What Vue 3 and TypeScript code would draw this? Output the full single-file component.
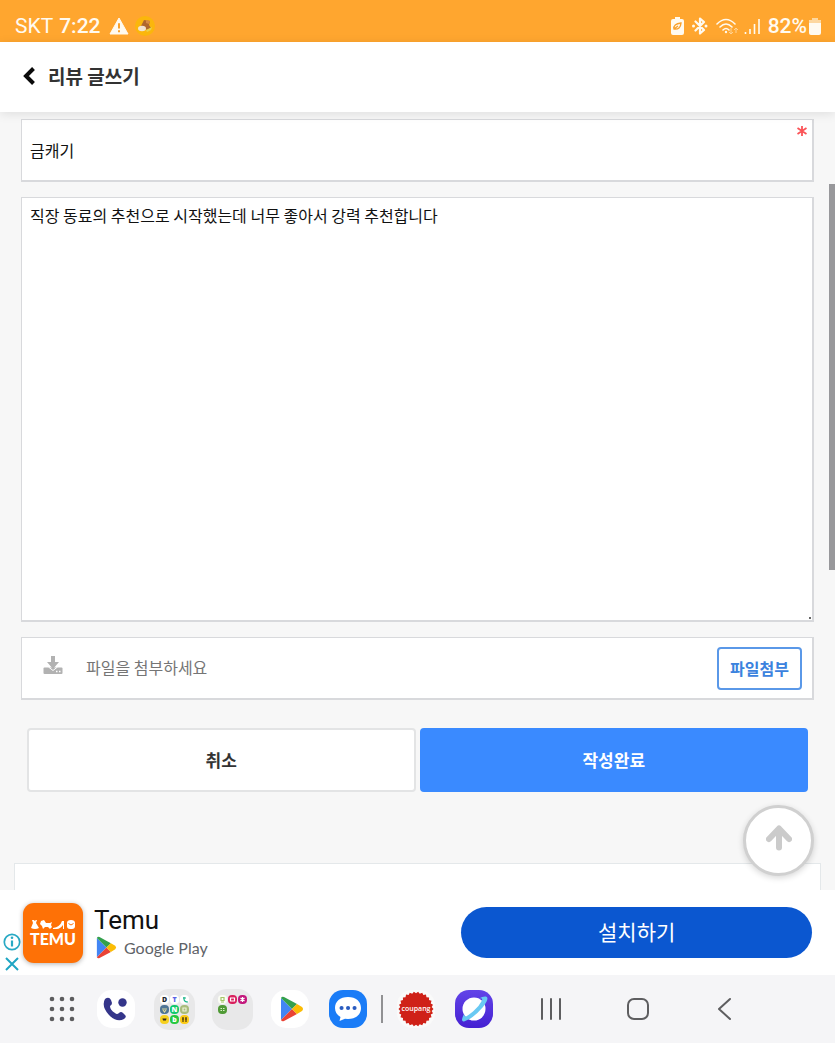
<script setup lang="ts">
import { ref } from 'vue'

interface MiniApp {
  color: string
  ink: string
  letter?: string
  path?: string
}

const title = ref('금캐기')
const review = ref('직장 동료의 추천으로 시작했는데 너무 좋아서 강력 추천합니다')
const fileName = ref('')
const filePicker = ref<HTMLInputElement | null>(null)

const folders: { name: string; apps: MiniApp[] }[] = [
  {
    name: '앱 폴더',
    apps: [
      { color: '#ffffff', ink: '#1d2530', letter: 'D' },
      { color: '#ffffff', ink: '#5b63e6', letter: 'T' },
      { color: '#ffffff', ink: '#17b487', path: 'M4 2v2q0 3 4 3M3 3h3' },
      { color: '#4f7596', ink: '#d8d7a0', path: 'M2 4h5M3 5l1.500 2L6 5' },
      { color: '#12c96b', ink: '#ffffff', letter: 'N' },
      { color: '#a9bd7c', ink: '#eef2d8', path: 'M3 3h3v3H3Z' },
      { color: '#f6d01f', ink: '#33291a', path: 'M2.500 4h4M3 5h3' },
      { color: '#27c840', ink: '#ffffff', letter: 'b' },
      { color: '#fccb14', ink: '#4d3c10', path: 'M3 2v5M2 4h2M6 2v5M5 4h2' },
    ],
  },
  {
    name: '도구 폴더',
    apps: [
      { color: '#fbfdf4', ink: '#a5c768', path: 'M3 2.500h3v3H3ZM3 7h3' },
      { color: '#d91f5c', ink: '#ffffff', path: 'M2.500 3h4v3h-4Z' },
      { color: '#c3177c', ink: '#ffffff', path: 'M4.500 2v5M2.500 3l4 3M6.500 3l-4 3' },
      { color: '#4f9a35', ink: '#d9f2c8', path: 'M2.500 3.500H4M5 3.500h1.500M2.500 5.500H4M5 5.500h1.500' },
    ],
  },
]

// Scalloped edge of the round red badge
const badgePoints: string = Array.from({ length: 52 }, (_, i) => {
  const r = i % 2 === 0 ? 17.5 : 15.8
  const a = (i * Math.PI) / 26
  return `${(20 + r * Math.cos(a)).toFixed(2)},${(20 + r * Math.sin(a)).toFixed(2)}`
}).join(' ')

function pickFile(): void {
  filePicker.value?.click()
}

function onFile(event: Event): void {
  const input = event.target as HTMLInputElement
  fileName.value = input.files?.[0]?.name ?? ''
}

function cancel(): void {
  title.value = ''
  review.value = ''
}

function toTop(): void {
  window.scrollTo({ top: 0, behavior: 'smooth' })
}
</script>

<template>
  <div class="screen">
    <div class="status">
      <div class="status-side">
        <span class="carrier">SKT</span>
        <span class="clock">7:22</span>
        <svg class="warn" width="20" height="18" viewBox="0 0 20 18" aria-hidden="true">
          <path d="M10 1 19 17H1Z" fill="#fffaf0" stroke="#fffaf0" stroke-linejoin="round" />
          <path d="M10 6.200v5.300M10 13.200v2" stroke="#f9a12c" stroke-width="2" />
        </svg>
        <svg width="20" height="20" viewBox="0 0 20 20" aria-hidden="true">
          <circle cx="10" cy="10" r="10" fill="#fbb60c" />
          <path d="m9 4 6 1-1 4 2 3-4 2-6-4Z" fill="#b0672c" />
          <path d="m11 4 4 1-1 3-3-1Z" fill="#d58a45" />
          <ellipse cx="7" cy="12.500" rx="4" ry="2.800" fill="#f3e3cf" />
          <path d="m11 14 6-3-1 3-4 2Z" fill="#e9d14b" />
        </svg>
      </div>
      <div class="status-side">
        <svg width="13" height="18" viewBox="0 0 13 18" aria-hidden="true">
          <path d="M4 0h5v2h2q2 0 2 2v12q0 2-2 2H2q-2 0-2-2V4q0-2 2-2h2Z" fill="#fffaf0" />
          <path d="M3 12q-1-5 7-6-.5 7-7 6Zm0 0 4-3" fill="none" stroke="#f9a12c" stroke-width="1.400" />
        </svg>
        <svg class="bluetooth" width="16" height="18" viewBox="0 0 16 18" aria-hidden="true">
          <path d="m3.500 4.500 8.500 8.500-4 3.500v-15l4 3.500-8.500 8.500" fill="none" stroke="#fffaf0" stroke-width="2.200" stroke-linejoin="round" stroke-linecap="round" />
          <circle cx="1.500" cy="9" r="1.500" fill="#fffaf0" />
          <circle cx="14" cy="9" r="1.500" fill="#fffaf0" />
        </svg>
        <svg width="22" height="17" viewBox="0 0 22 17" aria-hidden="true">
          <path d="M1 6q9-9 18 0M4 9q6-6 12 0M7 12q3-3 6 0" fill="none" stroke="#fffaf0" stroke-width="1.600" stroke-linecap="round" />
          <circle cx="10" cy="14" r="1.200" fill="#fffaf0" />
          <path d="M15 10v6m-2-2 2 2 2-2m3 1v-5m-2 2 2-2 2 2" fill="none" stroke="#ffd394" stroke-width="1" />
        </svg>
        <svg width="16" height="17" viewBox="0 0 16 17" aria-hidden="true">
          <path d="M1.500 14v2M6 11v5M10.500 6v10M15 1v15" stroke="#fffaf0" stroke-width="1.600" />
        </svg>
        <span class="battery">82%</span>
        <svg width="12" height="17" viewBox="0 0 12 17" aria-hidden="true">
          <path d="M3 0h6v2h2q1 0 1 1v12q0 2-2 2H2q-2 0-2-2V3q0-1 1-1h2Z" fill="#fffaf0" />
          <path d="M3 0h6v2h2q1 0 1 1v2H0V3q0-1 1-1h2Z" fill="#fdd79f" />
        </svg>
      </div>
    </div>

    <header class="top">
      <button class="back" type="button" aria-label="뒤로">
        <svg width="14" height="20" viewBox="0 0 14 20" aria-hidden="true">
          <path d="M11.500 2.500 4 10l7.500 7.500" fill="none" stroke="#0a0a0a" stroke-width="4" />
        </svg>
      </button>
      <h1>리뷰 글쓰기</h1>
    </header>

    <main class="page">
      <form class="form" @submit.prevent>
        <div class="field">
          <input v-model="title" class="text" type="text" aria-label="제목" required />
          <svg class="required" width="10" height="10" viewBox="0 0 10 10" aria-hidden="true">
            <path d="M5 0v10M.500 2l9 6M9.500 2l-9 6" stroke="#fb5357" stroke-width="1.800" />
          </svg>
        </div>

        <div class="field">
          <textarea v-model="review" class="text area" aria-label="리뷰 내용"></textarea>
          <span class="grip"></span>
        </div>

        <div class="file">
          <svg class="download" width="20" height="18" viewBox="0 0 20 18" aria-hidden="true">
            <path d="M1.500 11.500h17q1 0 1 1V17q0 1-1 1h-17q-1 0-1-1v-4.500q0-1 1-1Z" fill="#b2b2b2" />
            <path d="M8 0h4v6h4l-6 7-6-7h4Z" fill="#b2b2b2" />
            <path d="m5.500 11 4.500 3.500 4.500-3.500" fill="none" stroke="#fff" stroke-width="1" />
            <path d="M13 15.500h1.500M16 15.500h1.500" stroke="#fff" stroke-width="1.300" />
          </svg>
          <input class="file-name" type="text" :value="fileName" placeholder="파일을 첨부하세요" aria-label="첨부 파일" readonly />
          <input ref="filePicker" type="file" aria-label="파일 선택" hidden @change="onFile" />
          <button class="attach" type="button" @click="pickFile">파일첨부</button>
        </div>

        <div class="actions">
          <button class="action" type="button" @click="cancel">취소</button>
          <button class="action primary" type="submit">작성완료</button>
        </div>
      </form>

      <section class="next-card"></section>

      <button class="to-top" type="button" aria-label="맨 위로" @click="toTop">
        <svg width="26" height="26" viewBox="0 0 26 26" aria-hidden="true">
          <path d="M13 22.500V5M3 14 13 3.500 23 14" fill="none" stroke="#cbcbcb" stroke-width="6" stroke-linecap="round" stroke-linejoin="round" />
        </svg>
      </button>
      <span class="scroll-thumb"></span>
    </main>

    <aside class="ad">
      <div class="ad-marks">
        <svg width="18" height="18" viewBox="0 0 18 18" aria-hidden="true">
          <circle cx="9" cy="9" r="7.700" fill="#fff" stroke="#28a9c4" stroke-width="1.700" />
          <path d="M9 7.500v6" stroke="#28a9c4" stroke-width="2.200" />
          <circle cx="9" cy="4.800" r="1.300" fill="#28a9c4" />
        </svg>
        <button class="ad-close" type="button" aria-label="광고 닫기">
          <svg width="14" height="14" viewBox="0 0 14 14" aria-hidden="true">
            <path d="m1 1 12 12M13 1 1 13" stroke="#1ea5c3" stroke-width="2" />
          </svg>
        </button>
      </div>
      <div class="temu">
        <svg width="46" height="11" viewBox="0 0 46 11" fill="#fff" aria-hidden="true">
          <path d="M2 1h2l.7 1L6 1h1L6 4l3 5q-4 2-8 0l2-5Z" />
          <path d="m11 2 3-1 2 3h4l2-1-1 3 1 2-2 2-2-2h-3l-2 2-1-3-2-2Z" />
          <path d="M23 9q7-1 9-7h2v8h-1V6q-3 4-6 4h-4Z" />
          <path d="M37 4q0-3 4-3t4 3v3q0 3-3 3h-2q-3 0-3-3Z" />
          <path d="M38.500 4.500q2.500 3 5 0" fill="none" stroke="#fe7106" />
        </svg>
        <span class="temu-name">TEMU</span>
      </div>
      <div class="ad-text">
        <strong>Temu</strong>
        <span class="store">
          <svg width="21" height="23" viewBox="0 0 24 26" aria-hidden="true">
            <path d="M1 2v22L12 13Z" fill="#4285f4" />
            <path d="M1 2Q2 0 4 1l13 7-5 5Z" fill="#34a04c" />
            <path d="M1 24q1 2 3 1l13-7-5-5Z" fill="#ea4335" />
            <path d="m17 8 5 3q2 2 0 4l-5 3-5-5Z" fill="#fbbc04" />
          </svg>
          Google Play
        </span>
      </div>
      <a class="install" href="#install">설치하기</a>
    </aside>

    <nav class="dock" aria-label="앱 독">
      <button class="slot first" type="button" aria-label="모든 앱">
        <svg width="26" height="26" viewBox="0 0 26 26" fill="#5c5c5e" aria-hidden="true">
          <template v-for="y in 3" :key="y">
            <circle v-for="x in 3" :key="x" :cx="x * 10 - 7" :cy="y * 10 - 7" r="2.300" />
          </template>
        </svg>
      </button>
      <button class="slot" type="button" aria-label="전화">
        <svg width="40" height="40" viewBox="0 0 40 40" aria-hidden="true">
          <rect x="1" y="1" width="38" height="38" rx="15" fill="#fff" />
          <path d="M9 10q4-3 6 1l1 3q0 2-2 3 0 4 5 7 2 2 4 0 2-2 4 0l2 2q2 2-1 4-7 4-15-4-8-9-4-16Z" fill="#34358a" />
          <circle cx="26.500" cy="13.500" r="4.200" fill="#34358a" />
        </svg>
      </button>
      <button v-for="folder in folders" :key="folder.name" class="slot" type="button" :aria-label="folder.name">
        <span class="folder">
          <svg v-for="(app, i) in folder.apps" :key="i" width="9" height="9" viewBox="0 0 9 9" aria-hidden="true">
            <rect width="9" height="9" rx="4" :fill="app.color" />
            <path v-if="app.path" :d="app.path" :stroke="app.ink" fill="none" stroke-width="1.200" />
            <text v-else x="4.500" y="7" class="mini-letter" text-anchor="middle" :fill="app.ink">{{ app.letter }}</text>
          </svg>
        </span>
      </button>
      <button class="slot" type="button" aria-label="Play 스토어">
        <svg width="40" height="40" viewBox="0 0 40 40" aria-hidden="true">
          <rect x="1" y="1" width="38" height="38" rx="15" fill="#fff" />
          <g transform="translate(10 7)">
            <path d="M1 2v22L12 13Z" fill="#4285f4" />
            <path d="M1 2Q2 0 4 1l13 7-5 5Z" fill="#34a04c" />
            <path d="M1 24q1 2 3 1l13-7-5-5Z" fill="#ea4335" />
            <path d="m17 8 5 3q2 2 0 4l-5 3-5-5Z" fill="#fbbc04" />
          </g>
        </svg>
      </button>
      <button class="slot" type="button" aria-label="메시지">
        <svg width="40" height="40" viewBox="0 0 40 40" aria-hidden="true">
          <rect x="1" y="1" width="38" height="38" rx="14" fill="#1a7cf7" />
          <path d="M20 8c8 0 13 4.500 13 11s-5 11-13 11l-3-.3L11.500 32l1-4C9 26 7 23 7 19 7 12.500 12 8 20 8Z" fill="#fff" />
          <path d="M13.500 19h.1M20 19h.1M26.500 19h.1" stroke="#2a5cc0" stroke-width="4" stroke-linecap="round" />
        </svg>
      </button>
      <span class="divider"></span>
      <button class="slot" type="button" aria-label="쿠팡">
        <svg width="40" height="40" viewBox="0 0 40 40" aria-hidden="true">
          <rect x="1" y="1" width="38" height="38" rx="15" fill="#fafafa" />
          <polygon :points="badgePoints" fill="#cf2118" />
          <text x="20" y="22" class="badge-name" text-anchor="middle">coupang</text>
        </svg>
      </button>
      <button class="slot" type="button" aria-label="인터넷">
        <svg width="40" height="40" viewBox="0 0 40 40" aria-hidden="true">
          <defs>
            <linearGradient id="planet" x1="0" y1="0" x2="0" y2="1">
              <stop offset="0" stop-color="#6244e8" />
              <stop offset="1" stop-color="#4520d2" />
            </linearGradient>
          </defs>
          <rect x="1" y="1" width="38" height="38" rx="14" fill="url(#planet)" />
          <circle cx="20" cy="20" r="11.500" fill="#fff" />
          <path d="M10 25q-4 8 0 7.500Q19 30 29 18q7-9 3-10.500-3-.5-7 2 4-1 3 2-3 6-9 11-5 4-7 5-2 0-2-2.500Z" fill="#69c9f3" />
        </svg>
      </button>
      <button class="key recents" type="button" aria-label="최근 앱">
        <svg width="24" height="24" viewBox="0 0 24 24" aria-hidden="true">
          <path d="M3 2v20M12 2v20M21 2v20" stroke="#5e5e60" stroke-width="2" stroke-linecap="round" />
        </svg>
      </button>
      <button class="key" type="button" aria-label="홈">
        <svg width="24" height="24" viewBox="0 0 24 24" aria-hidden="true">
          <rect x="2" y="2" width="20" height="20" rx="6" fill="none" stroke="#5e5e60" stroke-width="2" />
        </svg>
      </button>
      <button class="key" type="button" aria-label="이전">
        <svg width="24" height="24" viewBox="0 0 24 24" aria-hidden="true">
          <path d="M17 2 6 12l11 10" fill="none" stroke="#5e5e60" stroke-width="2" stroke-linecap="round" stroke-linejoin="round" />
        </svg>
      </button>
    </nav>
  </div>
</template>

<style>
body {
  background: #f7f7f7;
}
</style>

<style scoped>
* {
  box-sizing: border-box;
}

.screen {
  display: flex;
  flex-direction: column;
  min-height: 100vh;
  background: #f7f7f7;
  color: #111;
  font-family: "Noto Sans CJK KR", "Noto Sans", sans-serif;
  font-size: 16px;
}

button,
input,
textarea {
  margin: 0;
  font: inherit;
}

button {
  padding: 0;
  border: 0;
  background: none;
  cursor: pointer;
}

svg {
  display: block;
  flex: none;
}

.status {
  display: flex;
  justify-content: space-between;
  align-items: center;
  height: 42px;
  padding: 10px 14px 0 15px;
  background: #ffa62f;
  color: #fffaf0;
  font-family: Roboto, sans-serif;
  font-size: 21px;
  line-height: 32px;
}

.status-side {
  display: flex;
  align-items: center;
  gap: 6px;
}

.carrier {
  font-size: 21px;
}

.clock,
.battery {
  font-weight: 500;
}

.warn {
  margin-left: 2px;
}

.bluetooth {
  margin: 0 2px;
}

.battery {
  margin: 0 -4px 0 2px;
}

.top {
  position: relative;
  z-index: 1;
  display: flex;
  align-items: center;
  gap: 12px;
  height: 70px;
  padding: 0 22px 2px;
  background: #fff;
  box-shadow: 0 2px 10px rgba(0, 0, 0, 0.1);
}

.top h1 {
  margin: 0;
  color: #333;
  font-size: 19px;
  font-weight: 700;
  line-height: 28px;
}

.page {
  position: relative;
  display: flex;
  flex: 1;
  flex-direction: column;
  padding: 7px 14px 0;
}

.form {
  display: flex;
  flex-direction: column;
  gap: 15px;
  padding: 0 7px;
}

.field {
  position: relative;
  display: flex;
}

.text {
  width: 100%;
  height: 63px;
  padding: 0 8px 1px;
  border: 2px solid #d8d9dc;
  border-width: 1px 2px 2px 1px;
  border-radius: 0;
  outline: none;
  background: #fff;
  color: #111;
}

.area {
  height: 425px;
  padding: 5px 8px;
  line-height: 24px;
  resize: none;
}

.required {
  position: absolute;
  top: 7px;
  right: 7px;
}

.grip {
  position: absolute;
  right: 3px;
  bottom: 3px;
  width: 2px;
  height: 2px;
  background: #666;
}

.file {
  display: flex;
  align-items: center;
  height: 63px;
  padding: 0 10px 0 21px;
  border: 2px solid #d8d9dc;
  border-width: 1px 2px 2px 1px;
  background: #fff;
}

.download {
  margin-bottom: 6px;
}

.file-name {
  flex: 1;
  min-width: 0;
  padding: 0 0 2px 23px;
  border: 0;
  outline: none;
  background: transparent;
}

.file-name::placeholder {
  color: #757575;
  opacity: 1;
}

.attach {
  height: 43px;
  padding: 0 11px;
  border: 2px solid #5a98e8;
  border-radius: 4px;
  color: #3b82de;
  font-weight: 700;
}

.actions {
  display: grid;
  grid-template-columns: 1fr 1fr;
  gap: 4px;
  padding: 13px 6px 0;
}

.action {
  height: 64px;
  padding-bottom: 2px;
  border: 2px solid #e3e4e5;
  border-radius: 4px;
  background: #fff;
  color: #333;
  font-size: 17px;
  font-weight: 700;
}

.primary {
  border-color: #3a8aff;
  background: #3a8aff;
  color: #fff;
}

.next-card {
  flex: 1;
  min-height: 27px;
  margin-top: 71px;
  border: 2px solid #e4e8ea;
  border-width: 1px 1px 0;
  background: #fff;
}

.to-top {
  position: absolute;
  right: 21px;
  bottom: 14px;
  display: grid;
  place-items: center;
  width: 71px;
  height: 71px;
  padding-bottom: 6px;
  border: 3px solid #d0d0d0;
  border-radius: 50%;
  background: #fff;
  box-shadow: 0 2px 6px rgba(0, 0, 0, 0.16);
}

.scroll-thumb {
  position: absolute;
  top: 72px;
  right: 0;
  width: 6px;
  height: 386px;
  background: #98989b;
}

.ad {
  display: flex;
  align-items: center;
  height: 85px;
  padding: 0 23px 0 3px;
  background: #fff;
}

.ad-marks {
  display: flex;
  flex-direction: column;
  align-items: center;
  gap: 6px;
  width: 18px;
  padding-top: 41px;
}

.ad-close {
  padding-bottom: 2px;
}

.temu {
  display: flex;
  flex-direction: column;
  align-items: center;
  justify-content: center;
  gap: 1px;
  width: 60px;
  height: 60px;
  margin-left: 2px;
  border-radius: 11px;
  background: #fe7106;
  box-shadow: 0 1px 5px rgba(0, 0, 0, 0.3);
}

.temu-name {
  color: #fff;
  font-family: Lato, sans-serif;
  font-size: 16px;
  font-weight: 900;
  line-height: 16px;
}

.ad-text {
  display: flex;
  flex: 1;
  flex-direction: column;
  margin-left: 11px;
  padding-bottom: 2px;
}

.ad-text strong {
  color: #111;
  font-family: Roboto, sans-serif;
  font-size: 26px;
  font-weight: 400;
  line-height: 32px;
}

.store {
  display: flex;
  align-items: center;
  gap: 7px;
  padding-left: 2px;
  color: #5f6368;
  font-family: Lato, sans-serif;
  font-size: 16px;
  line-height: 24px;
  white-space: nowrap;
}

.install {
  width: 42vw;
  padding-bottom: 2px;
  border-radius: 26px;
  background: #0b57d0;
  color: #fff;
  font-size: 21px;
  line-height: 49px;
  text-align: center;
  text-decoration: none;
}

.dock {
  display: flex;
  align-items: center;
  height: 68px;
  padding: 0 67px 0 37px;
  background: #f5f5f7;
}

.slot {
  display: grid;
  flex: 58;
  place-items: center;
  min-width: 0;
}

.first {
  flex: 50;
}

.key {
  display: grid;
  flex: 87;
  place-items: center;
  min-width: 0;
}

.recents {
  margin-left: 4px;
}

.divider {
  width: 2px;
  height: 28px;
  margin: 0 4px;
  background: #919193;
}

.folder {
  display: grid;
  grid-template-columns: repeat(3, 9px);
  grid-auto-rows: 9px;
  align-content: start;
  gap: 1px;
  width: 41px;
  height: 41px;
  padding: 6px;
  border-radius: 15px;
  background: #e8e8e9;
}

.mini-letter {
  font-family: "Open Sans", sans-serif;
  font-size: 7px;
  font-weight: 800;
}

.badge-name {
  fill: #fff;
  font-family: "Open Sans", sans-serif;
  font-size: 7px;
  font-weight: 600;
}
</style>
